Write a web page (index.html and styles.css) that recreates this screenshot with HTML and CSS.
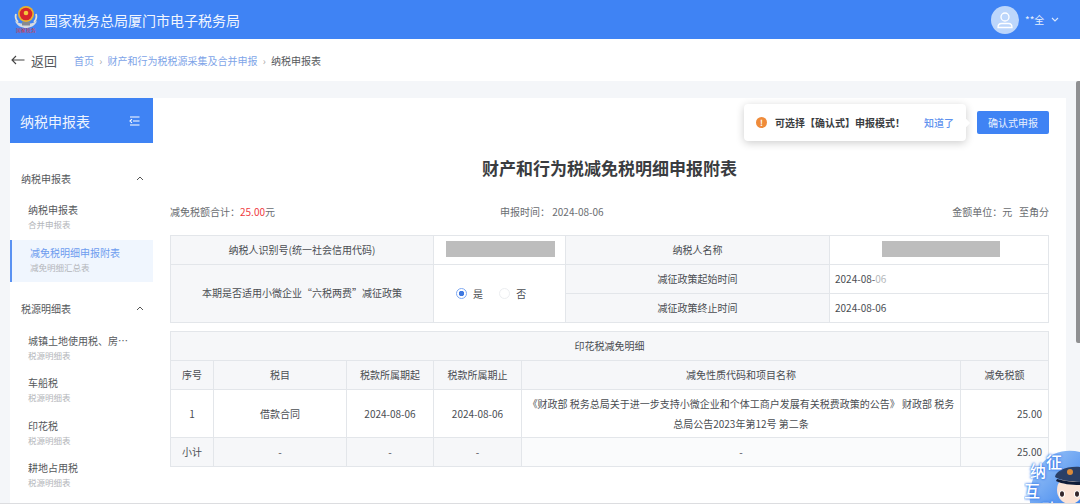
FILE: index.html
```html
<!DOCTYPE html>
<html lang="zh-CN">
<head>
  <meta charset="UTF-8" />
  <meta name="viewport" content="width=device-width, initial-scale=1.0"/>
  <title>财产和行为税减免税明细申报附表</title>
  <link rel="stylesheet" href="styles.css">
</head>
<body>

  <header class="topbar">
    <div class="brand">
      <svg class="emblem" width="26" height="34" viewBox="0 0 26 34">
        <g transform="translate(0 -2)">
          <path d="M2 20c2 5 7 7 11 7s9-2 11-7c-3 2-7 3-11 3s-8-1-11-3z" fill="#d5dae2"/>
          <path d="M3 13c-1 3 0 6 2 8M23 13c1 3 0 6-2 8" stroke="#e6e2d2" stroke-width="1.800" fill="none"/>
          <circle cx="13" cy="13" r="8" fill="#e9b22f"/>
          <circle cx="13" cy="13" r="6.300" fill="#d8262c"/>
          <circle cx="13" cy="12" r="2.300" fill="#f3c93c"/>
          <rect x="9" y="21" width="8" height="3.500" fill="#858992"/>
        </g>
        <text x="13" y="29" text-anchor="middle" class="emblem-text">国家税务</text>
      </svg>
      <span class="site-name">国家税务总局厦门市电子税务局</span>
    </div>
    <div class="user">
      <span class="avatar">
        <svg width="18" height="18" viewBox="0 0 18 18" fill="none" stroke="#fff" stroke-width="1.300">
          <circle cx="9" cy="6" r="4"/>
          <path d="M2 16.500c0-2.500 1.500-4 3.500-4h7c2 0 3.500 1.500 3.500 4z"/>
        </svg>
      </span>
      <span class="user-name">**全</span>
      <svg width="8" height="5" viewBox="0 0 8 5" fill="none" stroke="#dbe8fd" stroke-width="1.100"><path d="M1 1l3 3 3-3"/></svg>
    </div>
  </header>

  <div class="crumbbar">
    <a class="back">
      <svg width="14" height="10" viewBox="0 0 14 10" fill="none" stroke="#444" stroke-width="1.100"><path d="M13.500 5H1M5 1L1 5l4 4"/></svg>
      <span>返回</span>
    </a>
    <nav class="crumbs">
      <span class="crumb-link">首页</span><i>›</i>
      <span class="crumb-link">财产和行为税税源采集及合并申报</span><i>›</i>
      <span class="crumb-now">纳税申报表</span>
    </nav>
  </div>

  <div class="layout">
    <aside class="sidebar">
      <div class="side-title">
        <span>纳税申报表</span>
        <svg width="11" height="10" viewBox="0 0 11 10" fill="none" stroke="#fff" stroke-width="1.100"><path d="M1 1h9.500M4 5h6.500M1 9h9.500M3 3.200L1 5l2 1.800"/></svg>
      </div>
      <div class="side-list">
        <div class="side-group">
          <span>纳税申报表</span>
          <svg width="8" height="5" viewBox="0 0 8 5" fill="none" stroke="#555" stroke-width="1"><path d="M1 4l3-3 3 3"/></svg>
        </div>
        <div class="side-item"><b>纳税申报表</b><small>合并申报表</small></div>
        <div class="side-item active"><b>减免税明细申报附表</b><small>减免明细汇总表</small></div>

        <div class="side-group second">
          <span>税源明细表</span>
          <svg width="8" height="5" viewBox="0 0 8 5" fill="none" stroke="#555" stroke-width="1"><path d="M1 4l3-3 3 3"/></svg>
        </div>
        <div class="side-item"><b>城镇土地使用税、房产税</b><small>税源明细表</small></div>
        <div class="side-item"><b>车船税</b><small>税源明细表</small></div>
        <div class="side-item"><b>印花税</b><small>税源明细表</small></div>
        <div class="side-item"><b>耕地占用税</b><small>税源明细表</small></div>
      </div>
    </aside>

    <main class="content">
      <div class="toolbar">
        <div class="tip">
          <span class="tip-icon">!</span>
          <span class="tip-text">可选择【确认式】申报模式！</span>
          <span class="tip-ok">知道了</span>
        </div>
        <button class="btn-confirm">确认式申报</button>
      </div>

      <h1>财产和行为税减免税明细申报附表</h1>

      <div class="summary">
        <span class="sum-total">减免税额合计：<em>25.00</em>元</span>
        <span class="sum-date">申报时间：&nbsp;2024-08-06</span>
        <span class="sum-unit">金额单位：元&nbsp;&nbsp;&nbsp;至角分</span>
      </div>

      <table class="grid info">
        <colgroup>
          <col class="i1"><col class="i2"><col class="i3"><col>
        </colgroup>
        <tr>
          <th>纳税人识别号(统一社会信用代码)</th>
          <td><span class="mask mask-id"></span></td>
          <th>纳税人名称</th>
          <td><span class="mask mask-name"></span></td>
        </tr>
        <tr>
          <th rowspan="2">本期是否适用小微企业“六税两费”减征政策</th>
          <td rowspan="2" class="center radios">
            <span class="radio checked"></span><span class="radio-label">是</span>
            <span class="radio"></span><span class="radio-label">否</span>
          </td>
          <th>减征政策起始时间</th>
          <td class="date">2024-08-<span class="faded">06</span></td>
        </tr>
        <tr>
          <th>减征政策终止时间</th>
          <td class="date">2024-08-06</td>
        </tr>
      </table>

      <table class="grid detail">
        <colgroup>
          <col class="d1"><col class="d2"><col class="d3"><col class="d4"><col class="d5"><col>
        </colgroup>
        <tr><th colspan="6">印花税减免明细</th></tr>
        <tr>
          <th>序号</th>
          <th>税目</th>
          <th>税款所属期起</th>
          <th>税款所属期止</th>
          <th>减免性质代码和项目名称</th>
          <th>减免税额</th>
        </tr>
        <tr class="tall">
          <td class="center">1</td>
          <td class="center">借款合同</td>
          <td class="center">2024-08-06</td>
          <td class="center">2024-08-06</td>
          <td class="center policy">《财政部 税务总局关于进一步支持小微企业和个体工商户发展有关税费政策的公告》 财政部 税务总局公告2023年第12号 第二条</td>
          <td class="money">25.00</td>
        </tr>
        <tr class="subtotal">
          <td class="center">小计</td>
          <td class="center">-</td>
          <td class="center">-</td>
          <td class="center">-</td>
          <td class="center">-</td>
          <td class="money">25.00</td>
        </tr>
      </table>
    </main>
  </div>

  <div class="scroll-thumb"></div>

  <div class="helper">
    <svg width="56" height="64" viewBox="0 0 56 64">
      <defs>
        <linearGradient id="glow" x1="0" y1="0" x2="1" y2="1">
          <stop offset="0" stop-color="#a9cdf8"/>
          <stop offset="1" stop-color="#3f86ee"/>
        </linearGradient>
      </defs>
      <path d="M6 64C4 46 12 24 30 15c9-4 18-4 26-2v51z" fill="url(#glow)"/>
      <ellipse cx="46" cy="51" rx="13" ry="14" fill="#fbe3d6"/>
      <path d="M31 38c1-6 11-11 25-10v15c-10-1-19-1-25-5z" fill="#2a3f66"/>
      <path d="M33 40c7 2 15 3 23 3v3c-9 0-18-1-24-4z" fill="#101c38"/>
      <circle cx="46" cy="33" r="3" fill="#d98a3a"/>
      <ellipse cx="38" cy="55" rx="3" ry="3.500" fill="#fff"/>
      <ellipse cx="53" cy="55" rx="3" ry="3.500" fill="#fff"/>
      <ellipse cx="38" cy="55" rx="2" ry="2.800" fill="#33262a"/>
      <ellipse cx="53" cy="55" rx="2" ry="2.800" fill="#33262a"/>
    </svg>
    <span class="h-char h1">征</span>
    <span class="h-char h2">纳</span>
    <span class="h-char h3">互</span>
    <span class="h-char h4">动</span>
  </div>

</body>
</html>
```

FILE: styles.css
```css
:root {
  --blue: #3f83f4;
  --line: #e3e6ea;
  --cell-bg: #f6f7f9;
  --bg: #f4f6f9;
  --text: #4a4d52;
}

html, body {
  height: 504px;
  overflow: hidden;
}

body {
  margin: 0;
  background-color: var(--bg);
  color: var(--text);
  font-family: "Noto Sans CJK SC", "Noto Sans", sans-serif;
  font-size: 10px;
  position: relative;
  border-bottom: 1px solid #dcdde0;
  box-sizing: border-box;
}

/* top bar */
.topbar {
  height: 39px;
  background-color: var(--blue);
  display: flex;
  align-items: center;
  justify-content: space-between;
  padding: 0 21px 0 13px;
}

.brand {
  display: flex;
  align-items: center;
  gap: 5px;
}

.emblem-text {
  font-size: 5px;
  fill: #d8343a;
}

.site-name {
  color: #f2f6fe;
  font-size: 14px;
}

.user {
  display: flex;
  align-items: center;
  color: #e6effd;
}

.avatar {
  width: 28px;
  height: 28px;
  border-radius: 50%;
  background-color: #bcd6fb;
  display: flex;
  align-items: center;
  justify-content: center;
}

.user-name {
  margin: 0 6px 0 6px;
  width: 20px;
}

/* breadcrumb */
.crumbbar {
  height: 42px;
  background-color: #fff;
  display: flex;
  align-items: center;
  padding-left: 11px;
}

.back {
  display: flex;
  align-items: center;
  gap: 6px;
  font-size: 13px;
  color: #55585c;
  width: 63px;
}

.crumbs {
  display: flex;
  align-items: center;
  color: #8d9094;
}

.crumbs i {
  font-style: normal;
  margin: 0 5.250px;
  color: #aaa;
}

.crumb-link {
  color: #7ea4e8;
}

.crumb-now {
  color: #55585c;
}

/* layout */
.layout {
  display: flex;
  padding: 17px 14px 0 10px;
  height: 422px;
  box-sizing: border-box;
}

.sidebar {
  width: 143px;
  background-color: #fff;
  flex: none;
  overflow: hidden;
}

.side-title {
  height: 45px;
  background-color: var(--blue);
  color: #eef4fe;
  font-size: 14px;
  display: flex;
  align-items: center;
  justify-content: space-between;
  padding: 0 13px 0 10px;
}

.side-list {
  padding-top: 16px;
}

.side-group {
  height: 38px;
  display: flex;
  align-items: center;
  justify-content: space-between;
  padding: 0 9px 0 11px;
  color: #55585c;
}

.side-group.second {
  margin-top: 8px;
}

.side-item {
  height: 42.500px;
  box-sizing: border-box;
  padding: 5px 24px 0 18px;
  display: flex;
  flex-direction: column;
}

.side-item b {
  font-weight: 400;
  line-height: 15px;
  color: #55585c;
  white-space: nowrap;
  overflow: hidden;
  text-overflow: ellipsis;
}

.side-item small {
  font-size: 8.500px;
  line-height: 15px;
  color: #b3b5b9;
}

.side-item.active {
  height: 42px;
  background-color: #f0f6fe;
  border-left: 2px solid #5a92f2;
  padding-left: 18px;
}

.side-item.active b {
  color: #6d9cef;
}

/* main panel */
.content {
  flex: 1;
  background-color: #fff;
  padding: 13px 17px 0 17px;
}

.toolbar {
  position: relative;
  display: flex;
  justify-content: flex-end;
}

.btn-confirm {
  width: 72px;
  height: 23px;
  border: none;
  border-radius: 2px;
  background-color: var(--blue);
  color: #e8f0fe;
  font-family: inherit;
  font-size: 10px;
  padding: 0;
}

.tip {
  position: absolute;
  right: 83px;
  top: -7px;
  width: 222px;
  height: 37px;
  box-sizing: border-box;
  padding: 0 12px 0 12px;
  display: flex;
  align-items: center;
  background-color: #fff;
  border-radius: 4px;
  box-shadow: 0 2px 8px rgba(0, 0, 0, 0.2);
  z-index: 2;
}

.tip::after {
  content: "";
  position: absolute;
  right: -3px;
  top: 16px;
  width: 6px;
  height: 6px;
  background-color: #fff;
  transform: rotate(45deg);
}

.tip-icon {
  width: 11px;
  height: 11px;
  border-radius: 50%;
  background-color: #ef8b3a;
  color: #fff;
  font-size: 8px;
  line-height: 11px;
  text-align: center;
  font-weight: 700;
  margin-right: 8px;
}

.tip-text {
  font-weight: 700;
  color: #3a3c40;
  flex: 1;
}

.tip-ok {
  color: #5f92ee;
  font-weight: 500;
}

h1 {
  margin: 22px 0 0;
  font-size: 17px;
  line-height: 24px;
  font-weight: 700;
  text-align: center;
  color: #3a3c40;
}

.summary {
  display: flex;
  margin-top: 24px;
  height: 31px;
  line-height: 16px;
  color: #6a6d71;
}

.sum-total {
  width: 330px;
}

.sum-total em {
  font-style: normal;
  color: #ef3b42;
}

.sum-date {
  flex: 1;
}

/* tables */
.grid {
  width: 879px;
  border-collapse: collapse;
  table-layout: fixed;
  background-color: #fff;
}

.grid th,
.grid td {
  border: 1px solid var(--line);
  height: 29px;
  padding: 0 6px 2px;
  box-sizing: border-box;
  font-weight: 400;
}

.grid th {
  background-color: var(--cell-bg);
  color: var(--text);
  text-align: center;
}

.center {
  text-align: center;
}

.info .i1 { width: 263px; }
.info .i2 { width: 132px; }
.info .i3 { width: 264px; }

.grid .date {
  padding-left: 5px;
}

.grid .radios {
  padding-right: 23px;
}

.detail {
  margin-top: 8px;
}

.detail .d1 { width: 43px; }
.detail .d2 { width: 133px; }
.detail .d3 { width: 87px; }
.detail .d4 { width: 88px; }
.detail .d5 { width: 439px; }

.grid .tall td {
  height: 48px;
  padding-bottom: 0;
}

.subtotal td {
  background-color: #fafbfc;
}

.subtotal td:first-child,
.subtotal td:nth-child(2),
.subtotal td:nth-child(3),
.subtotal td:nth-child(4) {
  background-color: var(--cell-bg);
}

.grid .tall .policy {
  line-height: 20px;
  padding: 0 5px;
}

.money {
  text-align: right;
}

.mask {
  display: block;
  height: 16px;
  margin-bottom: 1px;
  background-color: #bdbdbd;
}

.mask-id {
  width: 109px;
  margin-left: 6px;
}

.mask-name {
  width: 118px;
  margin-left: 46px;
}

.faded {
  color: #b5b7ba;
}

.radio {
  display: inline-block;
  width: 11px;
  height: 11px;
  border-radius: 50%;
  border: 1px solid #eceef1;
  box-sizing: border-box;
  vertical-align: middle;
}

.radio.checked {
  border-color: #7fa9f2;
  background: radial-gradient(circle, #3f78e0 0 2.500px, #fff 3px);
}

.radio-label {
  margin: 0 14px 0 6px;
  vertical-align: middle;
}

.radio-label:last-child {
  margin-right: 0;
}

/* page scrollbar */
.scroll-thumb {
  position: absolute;
  right: 0;
  top: 81px;
  width: 4px;
  height: 262px;
  background-color: #8f9092;
  border-radius: 2px 0 0 2px;
}

/* floating helper */
.helper {
  position: absolute;
  right: 0;
  bottom: 0;
  width: 56px;
  height: 64px;
  overflow: hidden;
}

.helper svg {
  display: block;
}

.h-char {
  position: absolute;
  font-size: 16px;
  line-height: 18px;
  font-weight: 500;
  color: #fff;
  text-shadow: 0 0 3px #2f74ea, 0 0 2px #2f74ea;
}

.h1 { left: 22px; top: 13px; }
.h2 { left: 6px; top: 22px; }
.h3 { left: 0; top: 42px; }
.h4 { left: 17px; top: 60px; }
```
